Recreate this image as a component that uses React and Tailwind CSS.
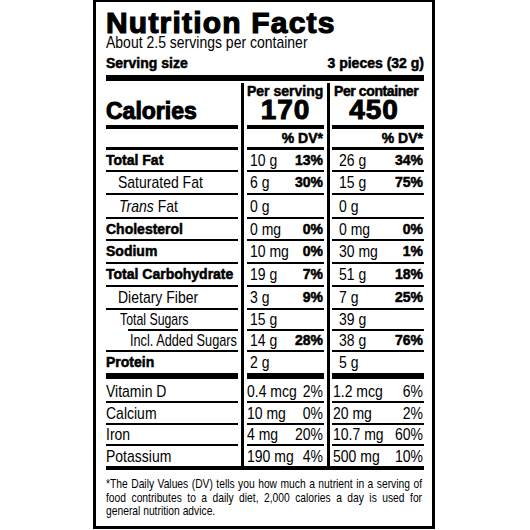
const sans = "font-['Liberation_Sans',Arial,sans-serif]";
const heavy = "font-['Liberation_Sans',Arial,sans-serif] font-bold [-webkit-text-stroke:0.5px_#000]";
const regular = "font-['Liberation_Sans',Arial,sans-serif] text-[14px]";

// row heights come from the label, lh = text area height
const nutrients = [
  { label: 'Total Fat', bold: true, h: 'h-[22px]', lh: 'leading-[20px]', s: ['10 g', '13%'], c: ['26 g', '34%'] },
  { label: 'Saturated Fat', indent: 'pl-[12px]', h: 'h-[23px]', lh: 'leading-[21px]', s: ['6 g', '30%'], c: ['15 g', '75%'] },
  { label: <><i>Trans</i> Fat</>, indent: 'pl-[13px]', h: 'h-[24px]', lh: 'leading-[22px]', s: ['0 g'], c: ['0 g'] },
  { label: 'Cholesterol', bold: true, h: 'h-[22px]', lh: 'leading-[20px]', s: ['0 mg', '0%'], c: ['0 mg', '0%'] },
  { label: 'Sodium', bold: true, h: 'h-[23px]', lh: 'leading-[21px]', s: ['10 mg', '0%'], c: ['30 mg', '1%'] },
  { label: 'Total Carbohydrate', bold: true, h: 'h-[23px]', lh: 'leading-[21px]', s: ['19 g', '7%'], c: ['51 g', '18%'] },
  { label: 'Dietary Fiber', indent: 'pl-[12px]', h: 'h-[23px]', lh: 'leading-[21px]', s: ['3 g', '9%'], c: ['7 g', '25%'] },
  { label: 'Total Sugars', indent: 'pl-[14px]', squeeze: 'origin-left scale-x-[0.88]', h: 'h-[21px]', lh: 'leading-[19px]', s: ['15 g'], c: ['39 g'], lineIndent: 'ml-[22px]' },
  { label: 'Incl. Added Sugars', indent: 'pl-[24px]', squeeze: 'origin-left scale-x-[0.91]', h: 'h-[21px]', lh: 'leading-[19px]', s: ['14 g', '28%'], c: ['38 g', '76%'] },
  { label: 'Protein', bold: true, h: 'h-[21px]', lh: 'leading-[21px]', s: ['2 g'], c: ['5 g'], last: true },
];

const vitamins = [
  { label: 'Vitamin D', h: 'h-[24px]', lh: 'leading-[20px] pt-[2px]', s: ['0.4 mcg', '2%'], c: ['1.2 mcg', '6%'] },
  { label: 'Calcium', h: 'h-[22px]', lh: 'leading-[20px]', s: ['10 mg', '0%'], c: ['20 mg', '2%'] },
  { label: 'Iron', h: 'h-[21px]', lh: 'leading-[19px]', s: ['4 mg', '20%'], c: ['10.7 mg', '60%'] },
  { label: 'Potassium', h: 'h-[20px]', lh: 'leading-[20px]', s: ['190 mg', '4%'], c: ['500 mg', '10%'], last: true },
];

// the label type is condensed and tall, so stretch Arial up a little
function Tall({ children, extra = '', bold }) {
  return (
    <span className={`inline-block whitespace-nowrap ${bold ? 'scale-y-[1.08]' : 'scale-y-[1.15]'} ${extra}`}>{children}</span>
  );
}

function Divider() {
  return <div className="ml-[3px] w-[3px] bg-black" />;
}

function Amount({ v, lh, boldPct, pad }) {
  return (
    <div className={`flex-1 flex justify-between items-baseline ${pad} pr-[1px]`}>
      <span className={`${regular} ${lh}`}><Tall>{v[0]}</Tall></span>
      {v[1] && (
        <span className={boldPct ? `${heavy} text-[14px] ${lh}` : `${regular} ${lh}`}>
          <Tall bold={boldPct}>{v[1]}</Tall>
        </span>
      )}
    </div>
  );
}

function NutrientRow({ r, boldPct, midPad, rightPad }) {
  const line = !r.last;
  return (
    <div className={`flex ${r.h}`}>
      <div className="w-[132px] flex flex-col">
        <div className={`flex-1 whitespace-nowrap ${r.lh} ${r.indent || ''} ${r.bold ? `${heavy} text-[14px]` : regular}`}>
          <Tall bold={r.bold} extra={r.squeeze}>{r.label}</Tall>
        </div>
        {line && <div className={`h-[2px] bg-black ${r.lineIndent || ''}`} />}
      </div>
      <Divider />
      <div className="ml-[3px] w-[77px] flex flex-col">
        <Amount v={r.s} lh={r.lh} boldPct={boldPct} pad={midPad} />
        {line && <div className="h-[2px] bg-black" />}
      </div>
      <Divider />
      <div className="ml-[2px] w-[92px] flex flex-col">
        <Amount v={r.c} lh={r.lh} boldPct={boldPct} pad={rightPad} />
        {line && <div className="h-[2px] bg-black" />}
      </div>
    </div>
  );
}

export default function App() {
  return (
    <div className="w-[530px] h-[530px] bg-white text-black">
      <div className="ml-[93px] w-[342px] h-[529px] border-x-[3px] border-t-2 border-b-[3px] border-black pl-[10px] pr-[8px]">
        <h1 className={`${sans} mt-[8px] h-[26px] leading-[26px] text-[30px] font-bold tracking-[1.2px] [-webkit-text-stroke:1.2px_#000]`}>
          Nutrition Facts
        </h1>
        <p className={`${regular} h-[13px] leading-[13px]`}>
          <Tall>About 2.5 servings per container</Tall>
        </p>
        <div className={`${heavy} flex justify-between pt-[2px] h-[26px] leading-[24px] text-[14px]`}>
          <span>Serving size</span>
          <span>3 pieces (32 g)</span>
        </div>
        <div className="h-[6px] bg-black" />

        <div className="mt-[2px]">
          {/* Calories header */}
          <div className="flex h-[46px]">
            <div className="w-[132px] flex flex-col">
              <div className={`${sans} flex-1 pt-[17px] leading-[23px] text-[23px] font-bold [-webkit-text-stroke:1px_#000]`}>Calories</div>
              <div className="h-[4px] bg-black" />
            </div>
            <Divider />
            <div className="ml-[3px] w-[77px] flex flex-col">
              <div className="flex-1 pt-[1px]">
                <div className={`${heavy} text-[14px] leading-[14px] whitespace-nowrap`}>Per serving</div>
                <div className={`${sans} text-center text-[28px] leading-[24px] font-bold tracking-[1px] [-webkit-text-stroke:1px_#000]`}>170</div>
              </div>
              <div className="h-[4px] bg-black" />
            </div>
            <Divider />
            <div className="ml-[2px] w-[92px] flex flex-col">
              <div className="flex-1 pt-[1px]">
                <div className={`${heavy} pl-[2px] text-[14px] leading-[14px] tracking-[-0.4px] whitespace-nowrap`}>Per container</div>
                <div className={`${sans} pr-[8px] text-center text-[28px] leading-[24px] font-bold tracking-[1px] [-webkit-text-stroke:1px_#000]`}>450</div>
              </div>
              <div className="h-[4px] bg-black" />
            </div>
          </div>

          {/* % DV row */}
          <div className="flex h-[21px]">
            <div className="w-[132px] flex flex-col">
              <div className="flex-1" />
              <div className="h-[3px] bg-black" />
            </div>
            <Divider />
            <div className="ml-[3px] w-[77px] flex flex-col">
              <div className={`${heavy} flex-1 text-right pr-[1px] text-[14px] leading-[18px]`}>% DV*</div>
              <div className="h-[3px] bg-black" />
            </div>
            <Divider />
            <div className="ml-[2px] w-[92px] flex flex-col">
              <div className={`${heavy} flex-1 text-right pr-[1px] text-[14px] leading-[18px]`}>% DV*</div>
              <div className="h-[3px] bg-black" />
            </div>
          </div>

          {nutrients.map((r, i) => (
            <NutrientRow key={i} r={r} boldPct midPad="pl-[3px]" rightPad="pl-[7px]" />
          ))}

          <div className="flex h-[6px]">
            <div className="w-[132px] bg-black" />
            <Divider />
            <div className="ml-[3px] w-[77px] bg-black" />
            <Divider />
            <div className="ml-[2px] w-[92px] bg-black" />
          </div>

          {vitamins.map((r, i) => (
            <NutrientRow key={i} r={r} midPad="pl-0" rightPad="pl-[1px]" />
          ))}
        </div>
        <div className="h-[4px] bg-black" />

        {/* set wide, then squeezed to the condensed width of the label */}
        <p className={`${sans} mt-[7px] w-[384px] origin-top-left scale-x-[0.823] scale-y-[1.08] text-[12.5px] leading-[12.5px] text-justify`}>
          *The Daily Values (DV) tells you how much a nutrient in a serving of food contributes to a daily diet, 2,000
          calories a day is used for general nutrition advice.
        </p>
      </div>
    </div>
  );
}
